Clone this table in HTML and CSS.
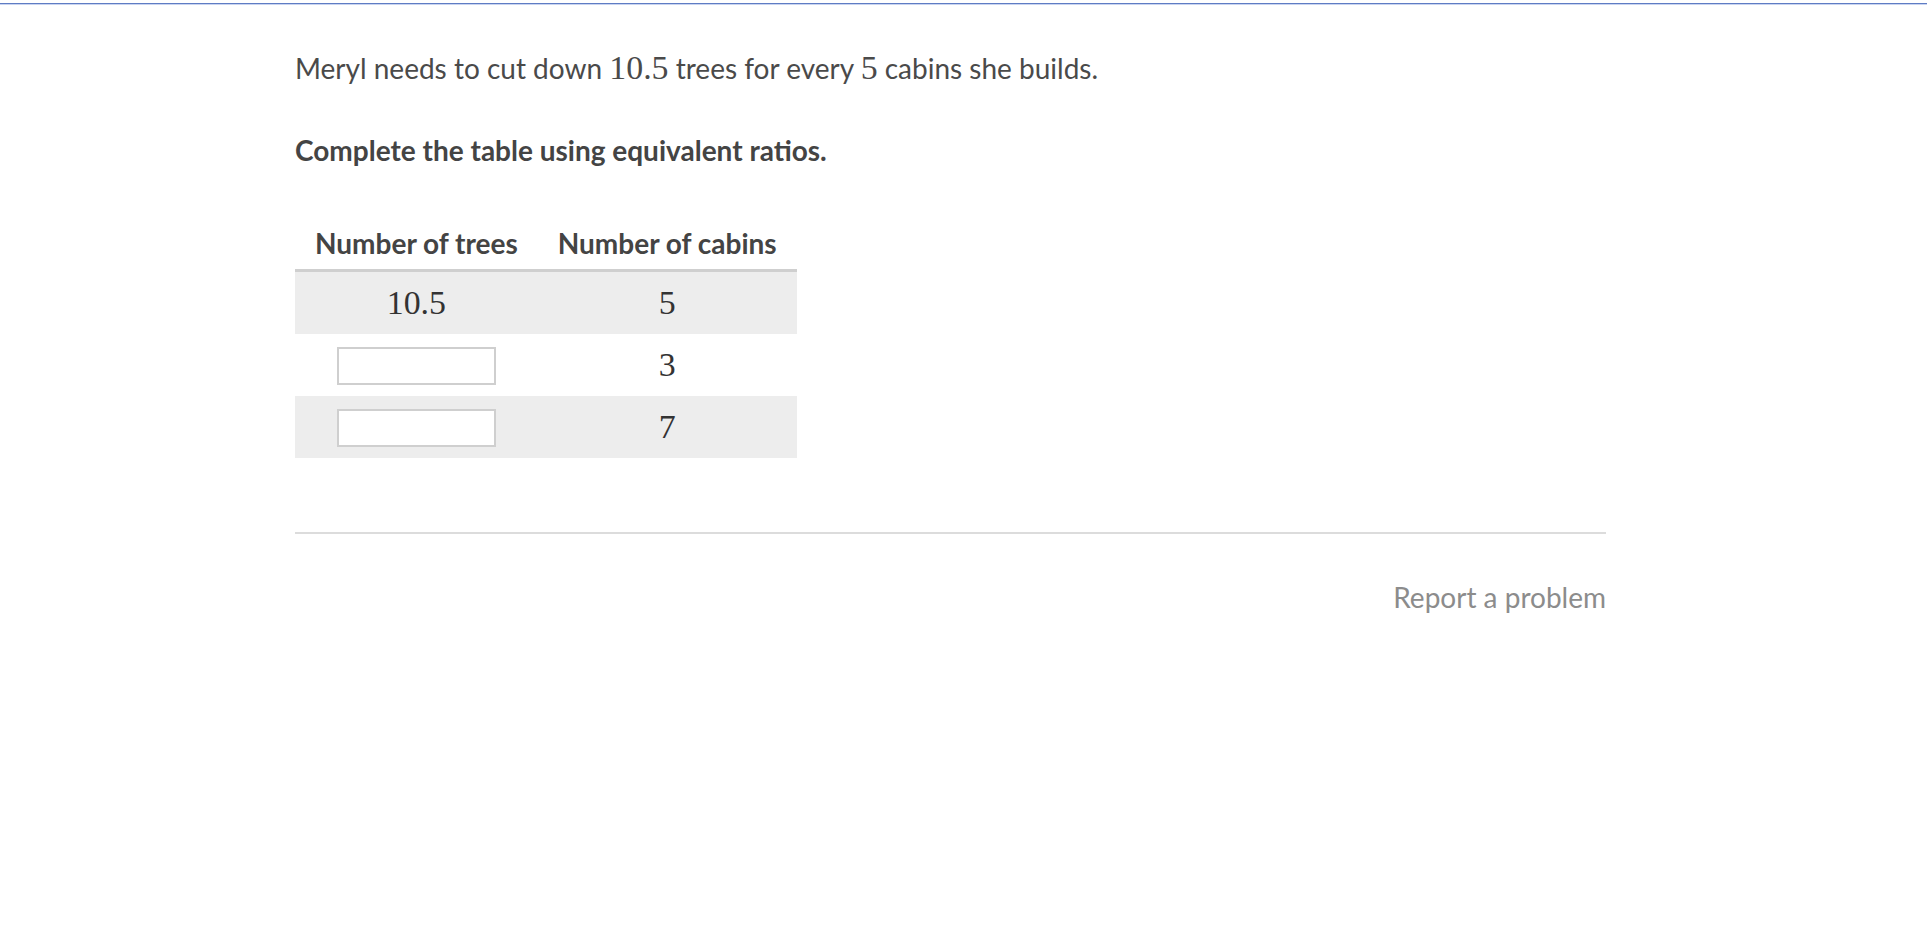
FILE: index.html
```html
<!DOCTYPE html>
<html>
<head>
<meta charset="utf-8">
<link rel="stylesheet" href="styles.css">
</head>
<body>
<div class="topline"></div>
<main class="content">
  <p class="prompt">Meryl needs to cut down <span class="math">10.5</span> trees for every <span class="math">5</span> cabins she builds.</p>
  <p class="instr">Complete the table using equivalent ratios.</p>
  <table class="ratio">
    <thead>
      <tr><th>Number of trees</th><th>Number of cabins</th></tr>
    </thead>
    <tbody>
      <tr class="shade"><td><span class="math">10.5</span></td><td><span class="math">5</span></td></tr>
      <tr><td><input class="blank" type="text"></td><td><span class="math">3</span></td></tr>
      <tr class="shade"><td><input class="blank" type="text"></td><td><span class="math">7</span></td></tr>
    </tbody>
  </table>
  <hr class="divider">
  <div class="footer"><a class="report">Report a problem</a></div>
</main>
</body>
</html>
```
FILE: styles.css
```css
html, body {
  margin: 0;
  padding: 0;
  background: #fff;
}
body {
  font-family: Lato, "Open Sans", sans-serif;
  color: #4a4a4a;
}
.topline {
  margin-top: 3px;
  height: 1px;
  background: #5f7cc4;
  border-bottom: 1px solid #c9d4f0;
}
.content {
  margin-left: 295px;
  width: 1311px;
  padding-top: 43px;
}
.prompt {
  margin: 0;
  font-size: 28px;
  line-height: 40px;
}
.math {
  font-family: "Liberation Serif", "Times New Roman", serif;
  font-size: 1.21em;
}
.instr {
  margin: 42px 0 0;
  font-size: 28px;
  line-height: 40px;
  font-weight: bold;
  color: #444;
}
.ratio {
  margin-top: 50px;
  border-collapse: collapse;
  font-size: 28px;
}
.ratio th {
  font-weight: bold;
  color: #444;
  padding: 6px 20px 9px;
  line-height: 34px;
  border-bottom: 3px solid #cfcfcf;
  text-align: center;
}
.ratio td {
  height: 62px;
  padding: 0 20px;
  text-align: center;
  color: #333;
  line-height: 34px;
}
.ratio tr.shade td {
  background: #ededed;
}
.blank {
  box-sizing: border-box;
  width: 159px;
  height: 38px;
  border: 2px solid #cfcfcf;
  background: #fff;
  vertical-align: middle;
  margin: 0;
}
.divider {
  margin: 74px 0 0;
  border: 0;
  height: 2px;
  background: #dcdcdc;
}
.footer {
  display: flex;
  justify-content: flex-end;
  margin-top: 43px;
}
.report {
  font-size: 28px;
  color: #8c8c8c;
  line-height: 40px;
}
```
